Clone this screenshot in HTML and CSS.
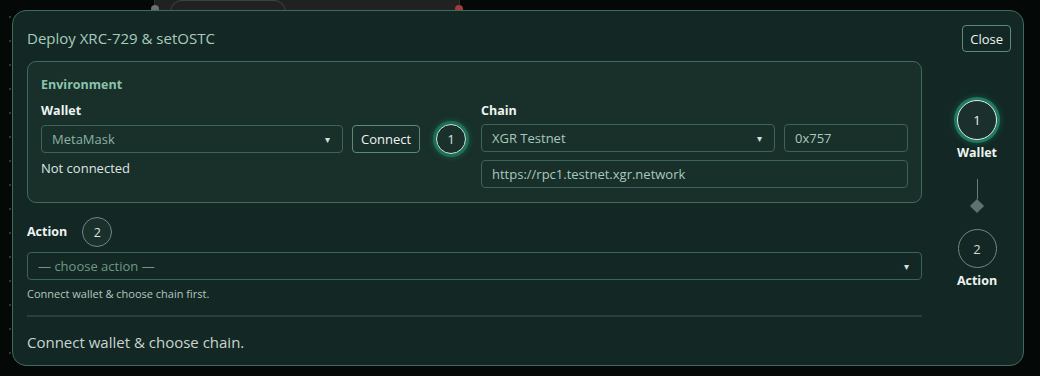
FILE: index.html
```html
<!DOCTYPE html>
<html lang="en">
<head>
  <meta charset="UTF-8">
  <title>Deploy XRC-729 &amp; setOSTC</title>
  <link rel="stylesheet" href="styles.css">
</head>
<body>
  <div class="canvas">
    <!-- node behind the dialog -->
    <div class="node">
      <span class="port in"></span>
      <span class="pill"><i class="dot"></i>Set OSTC on OST</span>
      <span class="port out"></span>
    </div>

    <div class="modal">
      <div class="modal-main">
        <h2 class="title">Deploy XRC-729 &amp; setOSTC</h2>

        <section class="panel">
          <div class="panel-title">Environment</div>
          <div class="env">
            <div class="col wallet">
              <label class="lbl">Wallet</label>
              <div class="row">
                <div class="select grow"><span class="muted">MetaMask</span><span class="caret">▾</span></div>
                <button class="btn">Connect</button>
                <span class="badge active">1</span>
              </div>
              <div class="state">Not connected</div>
            </div>
            <div class="col chain">
              <label class="lbl">Chain</label>
              <div class="row">
                <div class="select grow"><span class="muted">XGR Testnet</span><span class="caret">▾</span></div>
                <div class="input chain-id">0x757</div>
              </div>
              <div class="input">https://rpc1.testnet.xgr.network</div>
            </div>
          </div>
        </section>

        <div class="action-head">
          <label class="lbl">Action</label>
          <span class="badge">2</span>
        </div>
        <div class="select"><span class="placeholder">— choose action —</span><span class="caret">▾</span></div>
        <p class="hint">Connect wallet &amp; choose chain first.</p>
        <hr class="divider">
        <p class="status">Connect wallet &amp; choose chain.</p>
      </div>

      <aside class="steps">
        <button class="btn close">Close</button>
        <div class="step first">
          <span class="step-circle active">1</span>
          <span class="step-name">Wallet</span>
        </div>
        <div class="connector"><span class="line"></span><span class="diamond"></span></div>
        <div class="step">
          <span class="step-circle">2</span>
          <span class="step-name">Action</span>
        </div>
      </aside>
    </div>
  </div>
</body>
</html>
```

FILE: styles.css
```css
:root{
  --bg:#040807;
  --modal:#132824;
  --panel:#182f2a;
  --border:#3f6b5f;
  --field-border:#3b6357;
  --text:#e4ece8;
  --muted:#8cb3a3;
  --accent:#1f8a68;
}
*{box-sizing:border-box;}
html,body{margin:0;padding:0;height:100%;}
body{
  font-family:"Open Sans","Noto Sans",sans-serif;
  color:var(--text);
  background-color:var(--bg);
  background-image:radial-gradient(circle,#2b3a35 1px,transparent 1.2px);
  background-size:24px 24px;
  background-position:-2px 5px;
  overflow:hidden;
}
.canvas{position:relative;padding:10px 16px 10px 12px;height:100%;}

/* canvas node peeking from behind the dialog */
.node{
  position:absolute; left:154px; top:-20px;
  width:306px; height:40px;
  background:#202221; border:1px solid #2c302e; border-radius:6px;
}
.node .port{position:absolute;top:24px;width:8px;height:8px;border-radius:50%;}
.node .port.in{left:-4px;background:#6b6f6d;}
.node .port.out{right:-4px;background:#a33a3a;}
.node .pill{
  position:absolute;left:15px;top:19px;width:116px;
  padding:7px 10px 4px 10px;
  border:1px solid #3a4541;border-radius:12px;
  font-size:11px;color:#8a9a94;
  display:flex;align-items:center;gap:6px;white-space:nowrap;
}
.node .dot{width:9px;height:9px;border-radius:50%;background:#1f8a68;display:inline-block;}

.modal{
  position:relative;
  height:356px;
  display:flex;
  background:var(--modal);
  border:1px solid var(--border);
  border-radius:14px;
}
.modal-main{flex:1;padding:16px 9px 0 14px;min-width:0;}
.title{margin:0 0 12px;font-size:15px;font-weight:400;color:#a9cbbd;line-height:22px;}

.panel{
  background:var(--panel);
  border:1px solid var(--border);
  border-radius:9px;
  padding:14px 13px 14px;
}
.panel-title{font-size:12.5px;font-weight:700;color:#8cc3ab;line-height:18px;margin-bottom:9px;}
.env{display:flex;}
.col{display:flex;flex-direction:column;}
.wallet{width:440px;}
.chain{flex:1;}
.lbl{font-size:12.5px;font-weight:700;color:#eef4f1;line-height:16px;margin-bottom:5px;}
.row{display:flex;align-items:center;gap:9px;}
.chain .row{margin-bottom:8px;}

.select,.input{
  height:28px;
  border:1px solid var(--field-border);
  border-radius:4px;
  display:flex;align-items:center;
  padding:0 10px;
  font-size:13px;color:var(--muted);
}
.select{justify-content:space-between;}
.grow{flex:1;}
.wallet .select{flex:0 0 302px;}
.caret{font-size:10px;color:#d4e0db;margin-right:2px;}
.chain-id{width:124px;}
.chain .input,.chain .select .muted{color:#a9c9bc;}

.btn{
  font-family:inherit;
  height:28px;padding:0 8px;
  background:transparent;color:#eef4f1;
  border:1px solid #5a8a7c;border-radius:4px;
  font-size:13px;
}
.badge{
  width:30px;height:30px;border-radius:50%;
  border:1px solid #6d8a82;
  display:inline-flex;align-items:center;justify-content:center;
  font-size:12.5px;color:#dfe8e4;
  background:#1a302b;
}
.badge.active{
  margin-left:7px;
  border:1.5px solid #cfe2da;
  box-shadow:0 0 0 3px #1d6e56,0 0 6px 3px rgba(31,138,104,.5);
}
.state{font-size:13px;color:#dfe6e3;margin-top:5px;line-height:18px;}

.action-head{display:flex;align-items:center;gap:15px;margin:14px 0 5px;}
.action-head .lbl{margin:0;}
.placeholder{color:#6f9886;}
.hint{margin:6px 0 0;font-size:11px;color:#b5c6bf;line-height:15px;}
.divider{border:0;border-top:2px solid #27413a;margin:14px 0 0;}
.status{margin:15px 0 0;font-size:15px;color:#c9d5d0;line-height:20px;}

.steps{
  width:92px;
  display:flex;flex-direction:column;align-items:center;
  padding-top:14px;
}
.close{align-self:flex-end;margin-right:12px;height:27px;padding:0 7px;}
.step{display:flex;flex-direction:column;align-items:center;gap:5px;}
.step.first{margin-top:48px;}
.step-circle{
  width:39px;height:39px;border-radius:50%;
  border:1px solid #6e8882;
  display:flex;align-items:center;justify-content:center;
  font-size:13px;color:#cfdcd6;
}
.step-circle.active{
  width:40px;height:40px;
  border:1.5px solid #e0ece7;
  background:#1b302c;
  box-shadow:0 0 0 3px #1f7a5e,0 0 6px 3px rgba(31,138,104,.45);
  color:#eef4f1;
}
.step-name{font-size:12.5px;font-weight:700;color:#eef4f1;line-height:16px;}
.connector{display:flex;flex-direction:column;align-items:center;margin:18px 0 18px;}
.line{width:1px;height:20px;background:#6b7f79;}
.diamond{width:10px;height:10px;background:#5d736d;transform:rotate(45deg);margin-top:2px;}
```
